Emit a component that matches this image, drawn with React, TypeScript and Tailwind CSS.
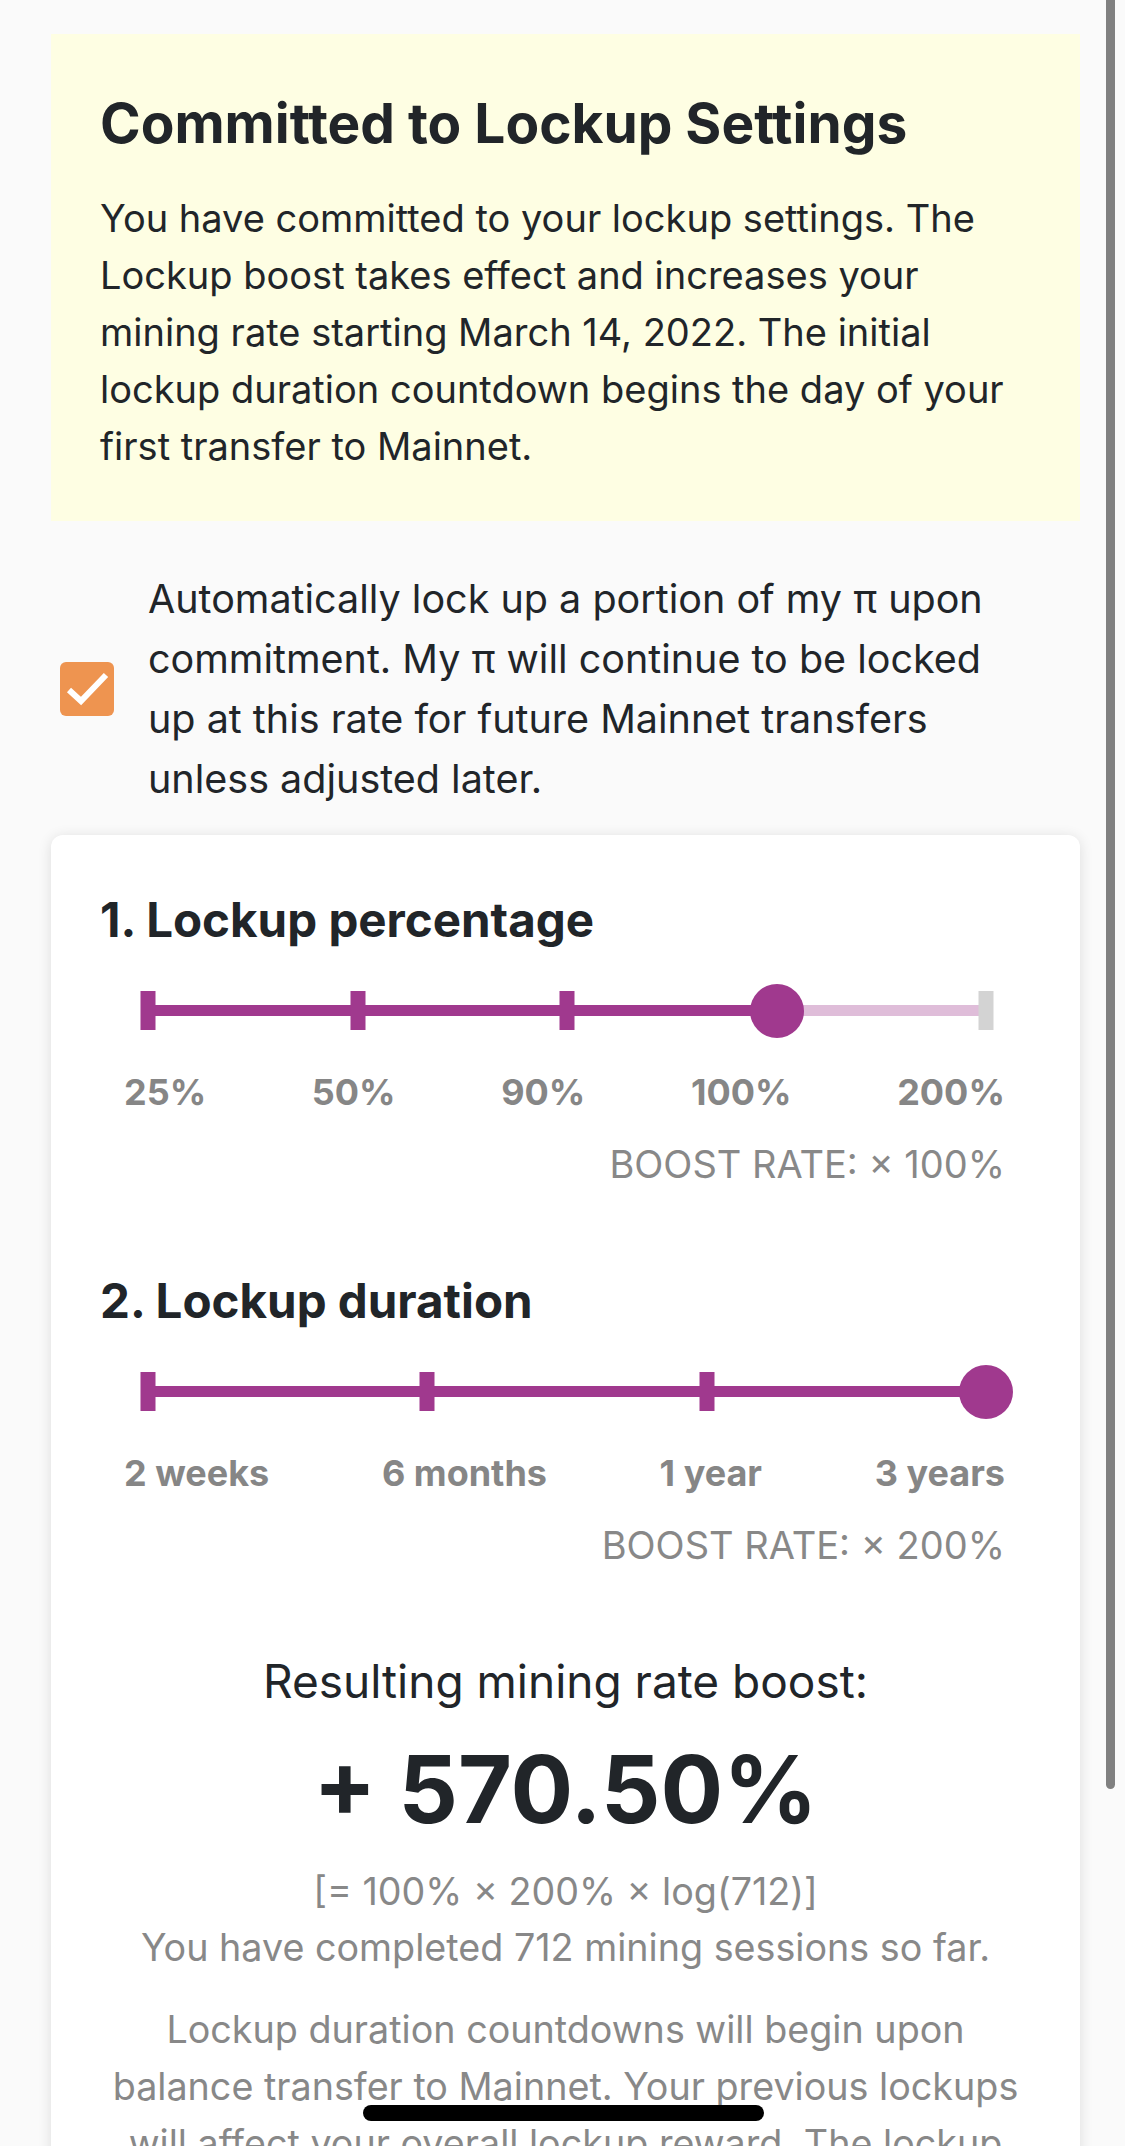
import React from "react";

const PURPLE = "#a0398e";
const PURPLE_LIGHT = "#dfbdd9";

type SliderProps = { stops: string[]; value: number };

// track with ticks, filled up to the thumb
const StepSlider = ({ stops, value }: SliderProps) => {
  const last = stops.length - 1;
  const pct = (value / last) * 100;
  return (
    <div className="ml-[41px] w-[852px] h-[54px] relative">
      <div className="absolute left-[7px] right-[7px] top-[21px] h-[11px]">
        <div className="absolute inset-0 rounded-full" style={{ background: PURPLE_LIGHT }} />
        <div className="absolute left-0 top-0 bottom-0 rounded-full" style={{ width: `${pct}%`, background: PURPLE }} />
        {stops.map((s, i) => (
          <div
            key={s}
            className="absolute top-[-14px] w-[15px] h-[39px] -translate-x-1/2"
            style={{ left: `${(i / last) * 100}%`, background: i <= value ? PURPLE : "#d3d3d3" }}
          />
        ))}
        <div
          className="absolute top-[-21px] w-[54px] h-[54px] rounded-full -translate-x-1/2"
          style={{ left: `${pct}%`, background: PURPLE }}
        />
      </div>
    </div>
  );
};

const Section = ({ title, stops, value, rate }: { title: string; stops: string[]; value: number; rate: string }) => (
  <section className="flex flex-col">
    <h2 className="text-[47.5px] leading-[56px] font-bold text-[#212529]">{title}</h2>
    <div className="mt-[36px]">
      <StepSlider stops={stops} value={value} />
    </div>
    <div className="mt-[34px] ml-[24px] mr-[26px] flex justify-between text-[36px] leading-[40px] font-bold text-[#868686]">
      {stops.map((s) => (
        <span key={s}>{s}</span>
      ))}
    </div>
    <div className="mt-[30px] mr-[26px] text-right text-[38px] leading-[44px] text-[#888888]">
      BOOST RATE: × {rate}
    </div>
  </section>
);

export default function App() {
  return (
    <div className="relative h-[2146px] overflow-hidden bg-[#fafafa] font-['Inter','Liberation_Sans',sans-serif] text-[#212529]">
      <div className="pl-[51px] pr-[45px] pt-[34px]">
        {/* Committed notice */}
        <div className="bg-[#fefee3] pl-[49px] pr-[40px] pt-[59px] pb-[46px]">
          <h1 className="text-[55px] leading-[60px] font-bold">Committed to Lockup Settings</h1>
          <p className="mt-[37px] text-[38px] leading-[57px]">
            You have committed to your lockup settings. The Lockup boost takes effect and increases your mining
            rate starting March 14, 2022. The initial lockup duration countdown begins the day of your first
            transfer to Mainnet.
          </p>
        </div>

        {/* Auto lockup checkbox */}
        <div className="mt-[48px] flex items-center">
          <div className="ml-[9px] w-[54px] h-[54px] shrink-0 rounded-[6px] bg-[#ee9450] flex items-center justify-center">
            <svg width="54" height="54" viewBox="0 0 54 54">
              <path d="M9 28 L21 39 L46 13" fill="none" stroke="white" strokeWidth="6" />
            </svg>
          </div>
          <p className="ml-[34px] pr-[80px] text-[39.5px] leading-[60px]">
            Automatically lock up a portion of my π upon commitment. My π will continue to be locked up at this
            rate for future Mainnet transfers unless adjusted later.
          </p>
        </div>

        {/* Lockup card */}
        <div className="mt-[26px] bg-white rounded-[12px] shadow-[0_2px_14px_rgba(0,0,0,0.12)] px-[49px] pt-[57px] pb-[60px]">
          <Section title="1. Lockup percentage" stops={["25%", "50%", "90%", "100%", "200%"]} value={3} rate="100%" />
          <div className="mt-[87px]">
            <Section title="2. Lockup duration" stops={["2 weeks", "6 months", "1 year", "3 years"]} value={3} rate="200%" />
          </div>

          <div className="mt-[86px] flex flex-col items-center text-center">
            <div className="text-[46px] leading-[56px]">Resulting mining rate boost:</div>
            <div className="mt-[30px] text-[93px] leading-[100px] font-bold">+ 570.50%</div>
            <div className="mt-[30px] text-[37.7px] leading-[44px] text-[#888888]">[= 100% × 200% × log(712)]</div>
            <div className="mt-[12px] text-[37.7px] leading-[44px] text-[#888888]">You have completed 712 mining sessions so far.</div>
            <p className="mt-[32px] text-[37.7px] leading-[57px] text-[#888888]">
              Lockup duration countdowns will begin upon
              <br />
              balance transfer to Mainnet. Your previous lockups
              <br />
              will affect your overall lockup reward. The lockup
              <br />
              rate and duration you choose now apply going forward.
            </p>
          </div>
        </div>
      </div>

      {/* scroll indicator */}
      <div className="absolute right-[10px] top-0 w-[9px] h-[1789px] bg-[#808080] rounded-b-full" />
      {/* home indicator */}
      <div className="absolute left-[363px] top-[2105px] w-[401px] h-[16px] rounded-full bg-black" />
    </div>
  );
}
